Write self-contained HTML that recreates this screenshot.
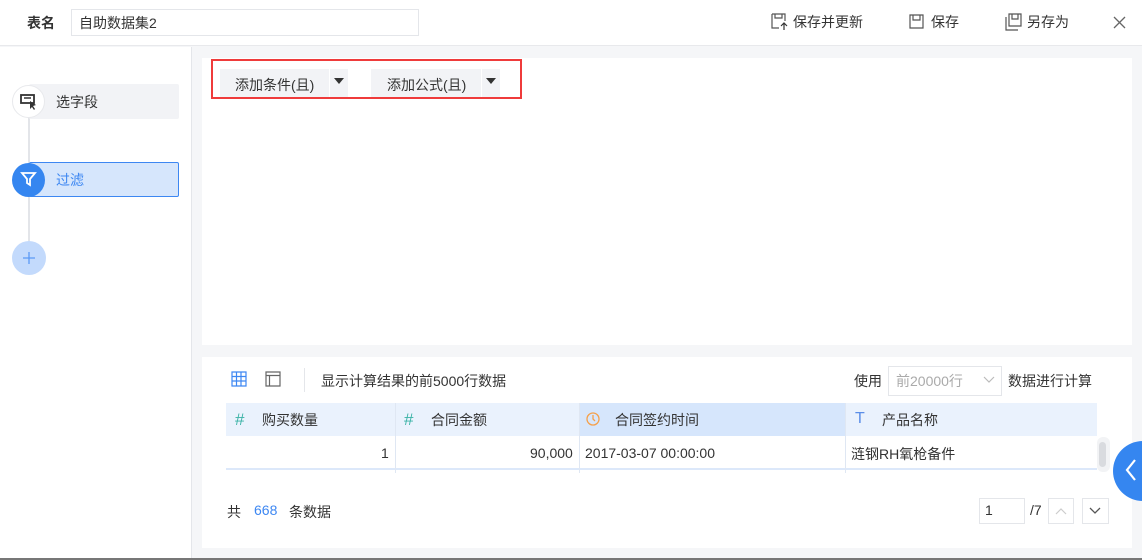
<!DOCTYPE html>
<html><head><meta charset="utf-8"><style>
*{box-sizing:border-box;margin:0;padding:0}
body{width:1142px;height:560px;overflow:hidden;background:#f5f6f8;font-family:"Liberation Sans","Noto Sans CJK SC",sans-serif;font-size:14px;color:#333;position:relative}
.a{position:absolute}
.t{white-space:nowrap}
</style></head><body>
<div class="a" style="left:0;top:0;width:1142px;height:46px;background:#fff;border-bottom:1px solid #e8e9ec"></div>
<div class="a t" style="left:27px;top:13px;font-weight:bold;color:#333">表名</div>
<div class="a" style="left:71px;top:9px;width:348px;height:27px;border:1px solid #e4e6ea;background:#fff"></div>
<div class="a t" style="left:79px;top:13px;color:#333">自助数据集2</div>
<svg class="a" style="left:771px;top:13px" width="18" height="18" viewBox="0 0 18 18" fill="none" stroke="#555" stroke-width="1.2"><path d="M1 1h13v7M1 1v14h7M4 1v4h7V1"/><path d="M13 10v7M10 13l3-3 3 3" stroke="#333"/></svg>
<div class="a t" style="left:793px;top:12px">保存并更新</div>
<svg class="a" style="left:909px;top:14px" width="16" height="16" viewBox="0 0 16 16" fill="none" stroke="#555" stroke-width="1.2"><path d="M1 1h13v13H1zM4 1v5h7V1"/></svg>
<div class="a t" style="left:931px;top:12px">保存</div>
<svg class="a" style="left:1005px;top:13px" width="18" height="18" viewBox="0 0 18 18" fill="none" stroke="#555" stroke-width="1.2"><path d="M4 1h12v12H4zM7 1v5h6V1M1 4v13h12"/></svg>
<div class="a t" style="left:1027px;top:12px">另存为</div>
<svg class="a" style="left:1113px;top:16px" width="13" height="13" viewBox="0 0 13 13" stroke="#666" stroke-width="1.3"><path d="M1 1l11 11M12 1L1 12"/></svg>

<div class="a" style="left:0;top:47px;width:192px;height:511px;background:#fff;border-right:1px solid #e4e6ea"></div>
<div class="a" style="left:28px;top:110px;width:2px;height:140px;background:#e3e5e9"></div>
<div class="a" style="left:29px;top:84px;width:150px;height:35px;background:#f2f3f6;border-radius:2px"></div>
<div class="a" style="left:12px;top:85px;width:33px;height:33px;border-radius:50%;background:#fff;border:1px solid #e8e9ec"></div>
<svg class="a" style="left:20px;top:94px" width="18" height="16" viewBox="0 0 18 16"><rect x="1" y="1" width="13" height="8" fill="none" stroke="#333" stroke-width="1.8"/><path d="M4 4h7" stroke="#333" stroke-width="1.5"/><path d="M10 7l6 4-3 1 2 3-1 1-2-3-2 2z" fill="#333"/></svg>
<div class="a t" style="left:56px;top:92px">选字段</div>
<div class="a" style="left:29px;top:162px;width:150px;height:35px;background:#d6e6fc;border:1px solid #3d87f2;border-radius:2px"></div>
<div class="a" style="left:12px;top:163px;width:33px;height:34px;border-radius:50%;background:#3586f0"></div>
<svg class="a" style="left:20px;top:171px" width="17" height="17" viewBox="0 0 17 17" fill="none" stroke="#fff" stroke-width="1.8"><path d="M2 2h13l-5 6v6l-3-2V8z"/></svg>
<div class="a t" style="left:56px;top:170px;color:#3d87f2">过滤</div>
<div class="a" style="left:12px;top:241px;width:34px;height:34px;border-radius:50%;background:#c3dafc"></div>
<svg class="a" style="left:22px;top:251px" width="14" height="14" viewBox="0 0 14 14" stroke="#5b9af5" stroke-width="1.3"><path d="M7 1v12M1 7h12"/></svg>

<div class="a" style="left:202px;top:58px;width:930px;height:287px;background:#fff"></div>
<div class="a" style="left:211px;top:59px;width:311px;height:40px;border:2px solid #ef3b3b"></div>
<div class="a" style="left:220px;top:69px;width:109px;height:28px;background:#f2f3f6"></div>
<div class="a" style="left:330px;top:69px;width:18px;height:28px;background:#f2f3f6"></div>
<div class="a t" style="left:235px;top:75px">添加条件(且)</div>
<div class="a" style="left:334px;top:78px;border-left:5px solid transparent;border-right:5px solid transparent;border-top:6px solid #333"></div>
<div class="a" style="left:371px;top:69px;width:110px;height:28px;background:#f2f3f6"></div>
<div class="a" style="left:482px;top:69px;width:18px;height:28px;background:#f2f3f6"></div>
<div class="a t" style="left:387px;top:75px">添加公式(且)</div>
<div class="a" style="left:486px;top:78px;border-left:5px solid transparent;border-right:5px solid transparent;border-top:6px solid #333"></div>

<div class="a" style="left:202px;top:357px;width:930px;height:191px;background:#fff"></div>
<svg class="a" style="left:231px;top:371px" width="16" height="16" viewBox="0 0 16 16" fill="none" stroke="#3d87f2" stroke-width="1.2"><path d="M1 1h14v14H1zM1 5.5h14M1 10h14M5.5 1v14M10 1v14"/></svg>
<svg class="a" style="left:265px;top:371px" width="16" height="16" viewBox="0 0 16 16" fill="none" stroke="#666" stroke-width="1.2"><path d="M1 1h14v14H1zM1 4.5h14M4.5 4.5v10.5"/></svg>
<div class="a" style="left:304px;top:368px;width:1px;height:24px;background:#e4e6ea"></div>
<div class="a t" style="left:321px;top:371px">显示计算结果的前5000行数据</div>
<div class="a t" style="left:854px;top:371px">使用</div>
<div class="a" style="left:888px;top:366px;height:30px;border:1px solid #e4e6ea;width:114px"></div>
<div class="a t" style="left:896px;top:371px;color:#aaa">前20000行</div>
<svg class="a" style="left:983px;top:376px" width="12" height="8" viewBox="0 0 12 8" fill="none" stroke="#bbb" stroke-width="1.2"><path d="M1 1l5 5 5-5"/></svg>
<div class="a t" style="left:1008px;top:371px">数据进行计算</div>

<div class="a" style="left:226px;top:403px;width:871px;height:33px;background:#eaf2fd"></div>
<div class="a" style="left:579px;top:403px;width:266px;height:33px;background:#d6e6fc"></div>
<div class="a" style="left:226px;top:436px;width:871px;height:34px;background:#fff;border-bottom:2px solid #dce8fa"></div>
<div class="a" style="left:395px;top:403px;width:1px;height:70px;background:#dfe7f3"></div>
<div class="a" style="left:579px;top:403px;width:1px;height:70px;background:#dfe7f3"></div>
<div class="a" style="left:845px;top:403px;width:1px;height:70px;background:#dfe7f3"></div>
<div class="a t" style="left:235px;top:410px;color:#3bb3a6;font-size:17px">#</div>
<div class="a t" style="left:262px;top:410px">购买数量</div>
<div class="a t" style="left:404px;top:410px;color:#3bb3a6;font-size:17px">#</div>
<div class="a t" style="left:431px;top:410px">合同金额</div>
<svg class="a" style="left:586px;top:411px" width="14" height="16" viewBox="0 0 14 16" fill="none" stroke="#f5a04a" stroke-width="1.3"><circle cx="7" cy="8" r="6"/><path d="M7 4v4l2 2"/></svg>
<div class="a t" style="left:615px;top:410px">合同签约时间</div>
<div class="a t" style="left:855px;top:410px;color:#5b8ee8;font-size:16px">T</div>
<div class="a t" style="left:882px;top:410px">产品名称</div>
<div class="a t" style="left:381px;top:445px">1</div>
<div class="a t" style="left:530px;top:445px">90,000</div>
<div class="a t" style="left:585px;top:445px">2017-03-07 00:00:00</div>
<div class="a t" style="left:851px;top:444px">涟钢RH氧枪备件</div>
<div class="a" style="left:1097px;top:437px;width:13px;height:35px;background:#f2f3f5;border-radius:6px"></div>
<div class="a" style="left:1099px;top:442px;width:7px;height:25px;background:#d9dbdf;border-radius:4px"></div>
<div class="a" style="left:1113px;top:441px;width:60px;height:60px;border-radius:50%;background:#3586f0"></div>
<svg class="a" style="left:1124px;top:458px" width="14" height="24" viewBox="0 0 14 24" fill="none" stroke="#fff" stroke-width="2.2"><path d="M11 2L3 12l8 10"/></svg>

<div class="a t" style="left:227px;top:502px">共</div>
<div class="a t" style="left:254px;top:502px;color:#3d87f2">668</div>
<div class="a t" style="left:289px;top:502px">条数据</div>
<div class="a" style="left:979px;top:498px;width:46px;height:26px;border:1px solid #e4e6ea"></div>
<div class="a t" style="left:985px;top:502px">1</div>
<div class="a t" style="left:1030px;top:502px">/7</div>
<div class="a" style="left:1048px;top:498px;width:26px;height:26px;border:1px solid #e4e6ea"></div>
<svg class="a" style="left:1055px;top:507px" width="12" height="8" viewBox="0 0 12 8" fill="none" stroke="#ccc" stroke-width="1.2"><path d="M1 7l5-5 5 5"/></svg>
<div class="a" style="left:1082px;top:498px;width:27px;height:26px;border:1px solid #e4e6ea"></div>
<svg class="a" style="left:1089px;top:507px" width="12" height="8" viewBox="0 0 12 8" fill="none" stroke="#555" stroke-width="1.3"><path d="M1 1l5 5 5-5"/></svg>
<div class="a" style="left:0;top:558px;width:1142px;height:2px;background:#777"></div>
</body></html>
